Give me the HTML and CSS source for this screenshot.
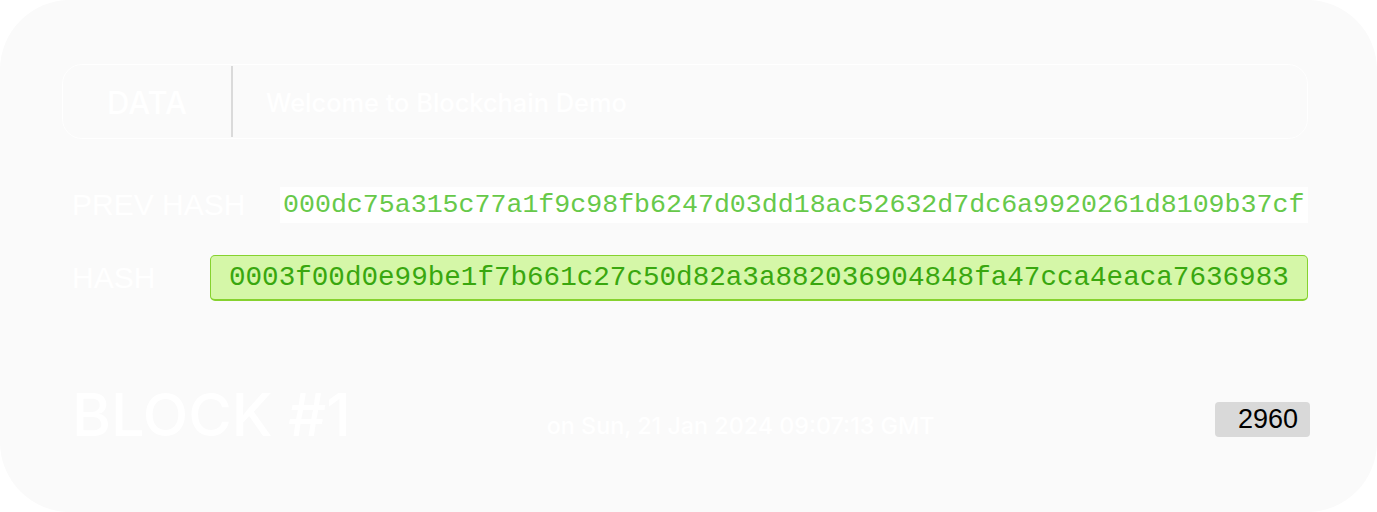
FILE: index.html
```html
<!DOCTYPE html>
<html>
<head>
<meta charset="utf-8">
<link rel="stylesheet" href="styles.css">
</head>
<body>
<div class="card">
  <div class="data-group">
    <div class="data-label">DATA</div>
    <div class="data-value">Welcome to Blockchain Demo</div>
  </div>
  <div class="row prev-row">
    <div class="label prev-label">PREV HASH</div>
    <div class="prev-value">000dc75a315c77a1f9c98fb6247d03dd18ac52632d7dc6a9920261d8109b37cf</div>
  </div>
  <div class="row hash-row">
    <div class="label hash-label">HASH</div>
    <div class="hash-value">0003f00d0e99be1f7b661c27c50d82a3a882036904848fa47cca4eaca7636983</div>
  </div>
  <div class="footer">
    <div class="block-title">BLOCK #1</div>
    <div class="block-date">on Sun, 21 Jan 2024 09:07:13 GMT</div>
    <div class="nonce">2960</div>
  </div>
</div>
</body>
</html>
```
FILE: styles.css
```css
html, body {
  margin: 0;
  padding: 0;
  background: #ffffff;
}
.card {
  box-sizing: border-box;
  width: 1377px;
  height: 512px;
  background: #fafafa;
  border-radius: 70px;
  padding: 64px 69px 0 62px;
  color: #ffffff;
  font-family: Inter, "Liberation Sans", sans-serif;
}
.data-group {
  box-sizing: border-box;
  height: 75px;
  border: 1px solid #ffffff;
  border-radius: 20px;
  display: flex;
  align-items: stretch;
}
.data-label {
  width: 170px;
  margin: 1px 0;
  border-right: 2px solid #dadada;
  display: flex;
  align-items: center;
  justify-content: center;
  font-size: 31px;
  font-weight: 500;
  padding-top: 2px;
  box-sizing: border-box;
}
.data-value {
  flex: 1;
  display: flex;
  align-items: center;
  padding-left: 33px;
  font-size: 25.4px;
  font-weight: 500;
  padding-top: 2px;
}
.row {
  display: flex;
  align-items: center;
}
.label {
  font-family: "Liberation Sans", Arial, sans-serif;
  font-size: 30px;
  padding-left: 10px;
  box-sizing: border-box;
}
.prev-row {
  margin-top: 48px;
  height: 36px;
}
.prev-label {
  width: 218px;
}
.prev-value {
  flex: 1;
  height: 36px;
  background: #ffffff;
  padding-left: 3px;
  display: flex;
  align-items: center;
  font-family: "Liberation Mono", "Courier New", monospace;
  font-size: 26.6px;
  color: #67c94a;
  white-space: nowrap;
}
.hash-row {
  margin-top: 32px;
  height: 46px;
}
.hash-label {
  width: 148px;
}
.hash-value {
  flex: 1;
  box-sizing: border-box;
  height: 46px;
  background: #d5f7a8;
  border: 1px solid #86d22f;
  border-bottom-width: 2px;
  border-radius: 5px;
  padding-left: 18px;
  display: flex;
  align-items: center;
  font-family: "Liberation Mono", "Courier New", monospace;
  font-size: 27.6px;
  color: #39a70f;
  white-space: nowrap;
}
.footer {
  margin-top: 84px;
  height: 60px;
  display: flex;
  align-items: center;
  padding-left: 10px;
}
.block-title {
  font-size: 59.3px;
  font-weight: 500;
  line-height: 1;
}
.block-date {
  margin-left: 196px;
  margin-top: 20px;
  font-size: 23.3px;
  font-weight: 500;
}
.nonce {
  margin-left: auto;
  margin-right: -2px;
  margin-top: 9px;
  width: 95px;
  height: 35px;
  box-sizing: border-box;
  background: #d9d9d9;
  border-radius: 4px;
  padding-right: 12px;
  display: flex;
  align-items: center;
  justify-content: flex-end;
  font-family: "Liberation Sans", Arial, sans-serif;
  font-size: 27px;
  color: #000000;
}
```
